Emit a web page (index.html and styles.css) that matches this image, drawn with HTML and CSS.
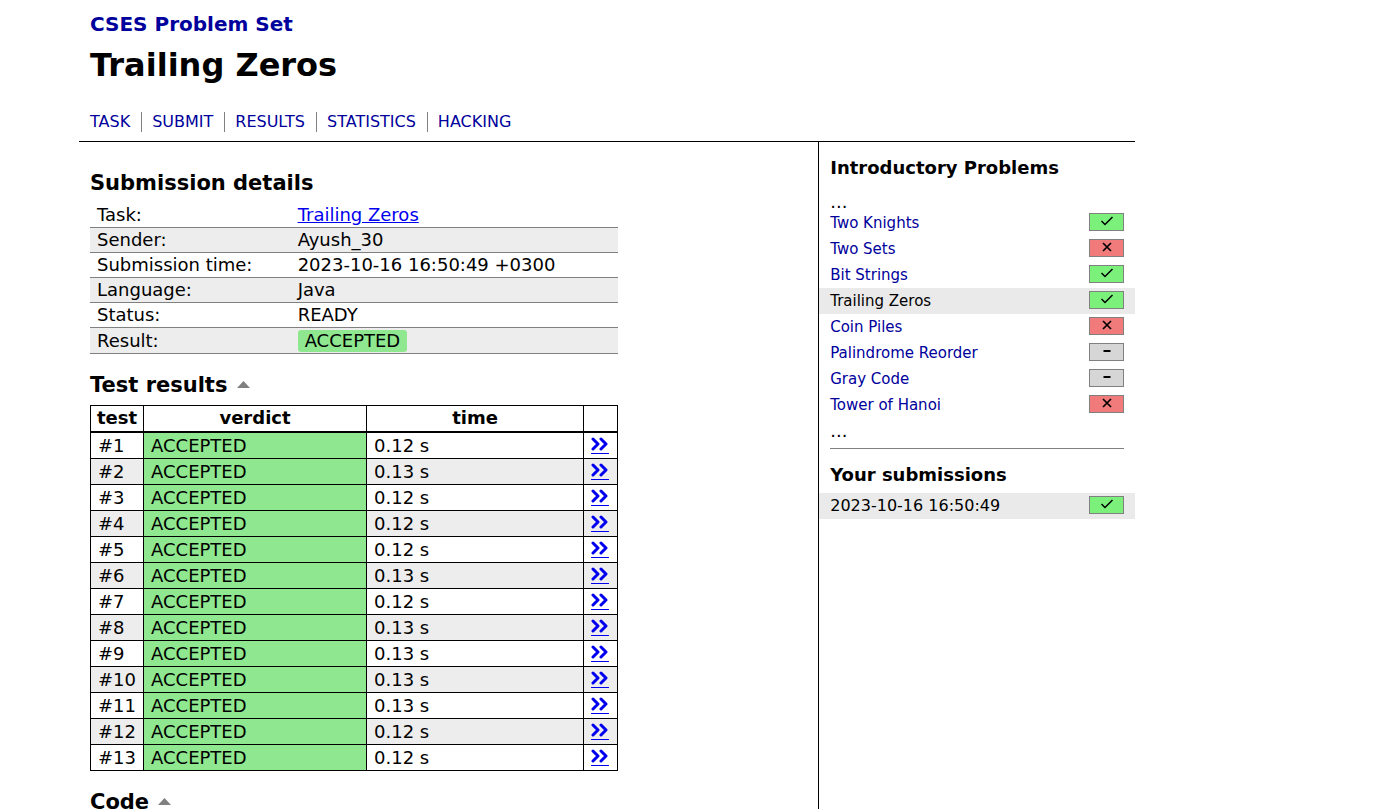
FILE: index.html
```html
<!DOCTYPE html>
<html lang="en">
<head>
<meta charset="utf-8">
<meta name="viewport" content="width=device-width, initial-scale=1">
<title>CSES - Trailing Zeros</title>
<link rel="stylesheet" href="styles.css">
<script src="script.js" defer></script>
</head>
<body>
<svg class="symbols" aria-hidden="true">
  <symbol id="angles" viewBox="0 0 18 14"><path d="M2 2l5 5-5 5M10 2l5 5-5 5" fill="none" stroke="currentColor" stroke-width="3" stroke-linecap="round" stroke-linejoin="round"/></symbol>
  <symbol id="caret" viewBox="0 0 13 7"><path d="M0 7L6.500 0L13 7z" fill="currentColor"/></symbol>
  <symbol id="check" viewBox="0 0 14 10"><path d="M1.500 5L5 8.500L12.500 1" fill="none" stroke="currentColor" stroke-width="1.500"/></symbol>
  <symbol id="cross" viewBox="0 0 14 10"><path d="M3 1l8 8M11 1L3 9" fill="none" stroke="currentColor" stroke-width="1.700"/></symbol>
  <symbol id="dash" viewBox="0 0 14 10"><path d="M3.500 5h7" fill="none" stroke="currentColor" stroke-width="2"/></symbol>
</svg>
<div class="page">
  <header class="header">
    <a class="site" href="#">CSES Problem Set</a>
    <h1>Trailing Zeros</h1>
    <nav class="nav">
      <a href="#">TASK</a>
      <a href="#">SUBMIT</a>
      <a href="#">RESULTS</a>
      <a href="#">STATISTICS</a>
      <a href="#">HACKING</a>
    </nav>
  </header>
  <div class="columns">
    <main class="content">
      <h2>Submission details</h2>
      <table class="summary">
        <tr><th scope="row">Task:</th><td><a href="#">Trailing Zeros</a></td></tr>
        <tr><th scope="row">Sender:</th><td>Ayush_30</td></tr>
        <tr><th scope="row">Submission time:</th><td>2023-10-16 16:50:49 +0300</td></tr>
        <tr><th scope="row">Language:</th><td>Java</td></tr>
        <tr><th scope="row">Status:</th><td>READY</td></tr>
        <tr class="result"><th scope="row">Result:</th><td><span class="verdict">ACCEPTED</span></td></tr>
      </table>
      <h2>Test results <button class="toggle" aria-label="Collapse test results"><svg><use href="#caret"/></svg></button></h2>
      <table class="tests">
        <colgroup><col class="col-test"><col><col class="col-time"><col class="col-more"></colgroup>
        <thead><tr><th scope="col">test</th><th scope="col">verdict</th><th scope="col">time</th><th></th></tr></thead>
        <tbody id="tests"></tbody>
      </table>
      <h2>Code <button class="toggle" aria-label="Collapse code"><svg><use href="#caret"/></svg></button></h2>
    </main>
    <aside class="sidebar">
      <h3>Introductory Problems</h3>
      <div class="more">...</div>
      <ul class="list">
        <li><a href="#">Two Knights</a><span class="score full"><svg><use href="#check"/></svg></span></li>
        <li><a href="#">Two Sets</a><span class="score zero"><svg><use href="#cross"/></svg></span></li>
        <li><a href="#">Bit Strings</a><span class="score full"><svg><use href="#check"/></svg></span></li>
        <li class="current"><a href="#">Trailing Zeros</a><span class="score full"><svg><use href="#check"/></svg></span></li>
        <li><a href="#">Coin Piles</a><span class="score zero"><svg><use href="#cross"/></svg></span></li>
        <li><a href="#">Palindrome Reorder</a><span class="score"><svg><use href="#dash"/></svg></span></li>
        <li><a href="#">Gray Code</a><span class="score"><svg><use href="#dash"/></svg></span></li>
        <li><a href="#">Tower of Hanoi</a><span class="score zero"><svg><use href="#cross"/></svg></span></li>
      </ul>
      <div class="more">...</div>
      <hr>
      <h3>Your submissions</h3>
      <ul class="list submissions">
        <li class="current"><a href="#">2023-10-16 16:50:49</a><span class="score full"><svg><use href="#check"/></svg></span></li>
      </ul>
    </aside>
  </div>
</div>
</body>
</html>
```
FILE: styles.css
```css
* { box-sizing: border-box; }
body {
  margin: 0;
  background: #fff;
  color: #000;
  font-family: Verdana, "DejaVu Sans", sans-serif;
  font-size: 18px;
  line-height: 24px;
}
.symbols { position: absolute; width: 0; height: 0; }
.page {
  display: flex;
  flex-direction: column;
  max-width: 1135px;
  min-height: 100vh;
  padding-left: 79px;
}
.header {
  padding: 12px 11px 9px;
  border-bottom: 1px solid #000;
}
.site {
  color: #00009c;
  font-size: 20px;
  font-weight: bold;
  text-decoration: none;
}
h1 {
  margin: 8px 0 27px;
  font-size: 32px;
  line-height: 40px;
}
.nav { display: flex; font-size: 16px; line-height: 20px; }
.nav a { color: #00009c; text-decoration: none; }
.nav a + a {
  margin-left: 11px;
  padding-left: 10px;
  border-left: 1px solid #808080;
}
.columns { display: flex; flex: 1; }
.content { flex: 1; padding: 26px 11px 0; }
h2 { margin: 0 0 5px; font-size: 21px; line-height: 30px; }
.summary, .tests {
  width: 528px;
  max-width: 100%;
  margin-bottom: 16px;
  border-collapse: collapse;
}
.summary tr { border-bottom: 1px solid #808080; }
.summary tr:nth-child(even), .tests tbody tr:nth-child(even) { background: #ededed; }
.summary th, .summary td { padding: 0 7px; font-weight: normal; text-align: left; }
.summary th { width: 38%; }
.summary .result { height: 26px; }
.content td a { color: #0000ee; }
.verdict {
  display: inline-block;
  padding: 0 7px;
  border-radius: 3px;
  background: #8fe88f;
  line-height: 22px;
}
.toggle { padding: 0; border: 0; margin-left: 2px; background: none; color: #808080; }
.toggle svg { display: block; width: 13px; height: 7px; margin-bottom: 4px; }
.tests { table-layout: fixed; border: 1px solid #000; }
.tests th, .tests td { height: 26px; padding: 1px 7px 0; border: 1px solid #000; }
.tests th { padding: 0; border-bottom-width: 2px; }
.tests td:nth-child(2) { background: #8fe88f; }
.col-test { width: 53px; }
.col-time { width: 217px; }
.col-more { width: 34px; }
.more-link { display: block; width: 18px; border-bottom: 1px solid #0000ee; }
.more-link svg { display: block; width: 18px; height: 14px; margin-bottom: 2px; }
.sidebar {
  width: 30%;
  padding: 14px 11px 0;
  border-left: 1px solid #000;
}
h3 { margin: 0 0 6px; font-size: 18px; line-height: 24px; }
.list { margin: 0 -11px; padding: 0; list-style: none; font-size: 15px; }
.submissions { font-size: 16px; }
.list li {
  display: flex;
  align-items: center;
  justify-content: space-between;
  height: 26px;
  padding: 0 11px;
}
.list a { color: #00009c; text-decoration: none; }
.list .current { background: #eaeaea; }
.list .current a { color: #000; }
.score {
  display: flex;
  justify-content: center;
  width: 35px;
  height: 18px;
  margin-bottom: 2px;
  padding-top: 2px;
  border: 1px solid #808080;
  background: #d6d6d6;
}
.score svg { width: 14px; height: 10px; }
.full { background: #7bf17b; }
.zero { background: #f17b7b; }
.more { height: 21px; line-height: 26px; }
h3 + .more { margin-top: 9px; }
hr { margin: 9px 0 14px; border: 0; border-top: 1px solid #808080; }
```
FILE: script.js
```js
const times = ["0.12", "0.13", "0.12", "0.12", "0.12", "0.13", "0.12", "0.13", "0.13", "0.13", "0.13", "0.12", "0.12"];
document.getElementById("tests").innerHTML = times.map((time, i) => `
  <tr>
    <td>#${i + 1}</td>
    <td>ACCEPTED</td>
    <td>${time} s</td>
    <td><a class="more-link" href="#" aria-label="Details of test ${i + 1}"><svg><use href="#angles"/></svg></a></td>
  </tr>`).join("");
```
